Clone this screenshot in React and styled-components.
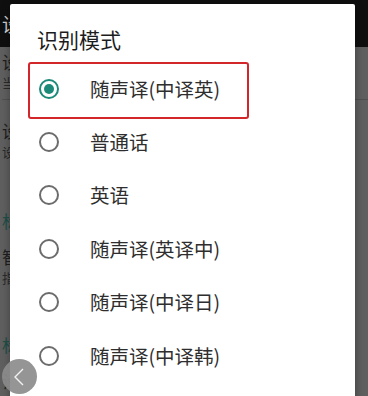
import React from 'react';
import styled, { createGlobalStyle } from 'styled-components';

const GlobalStyle = createGlobalStyle`
  html, body {
    margin: 0;
    padding: 0;
    background: #5f5f5f;
    overflow: hidden;
  }
  body {
    font-family: "Noto Sans CJK SC", "Noto Sans", sans-serif;
  }
`;

const Screen = styled.div`
  position: relative;
  width: 368px;
  height: 396px;
  overflow: hidden;
  background: #5f5f5f;
`;

const AppBar = styled.div`
  height: 47px;
  background: #0f0f0f;
  color: #cfcfcf;
  font-size: 19px;
  display: flex;
  align-items: center;
  padding-left: 2px;
`;

const BgList = styled.div`
  display: flex;
  flex-direction: column;
  padding-left: 2px;
`;

const BgItem = styled.div`
  display: flex;
  flex-direction: column;
  gap: ${p => p.gap || '0px'};
  padding: ${p => p.pad || '6px 0'};
  border-bottom: ${p => (p.line ? '1px solid #505050' : 'none')};
`;

const BgTitle = styled.span`
  font-size: 17px;
  line-height: 22px;
  color: ${p => (p.accent ? '#1f4f48' : '#1e1e1e')};
`;

const BgSub = styled.span`
  font-size: 13px;
  line-height: 20px;
  color: #2a2a2a;
`;

const Dialog = styled.div`
  position: absolute;
  top: 4px;
  left: 10px;
  width: 345px;
  height: 420px;
  background: #ffffff;
  border-radius: 2px;
  box-shadow: 0 2px 8px rgba(0, 0, 0, 0.35);
  display: flex;
  flex-direction: column;
`;

const Title = styled.h2`
  margin: 0;
  height: 58px;
  box-sizing: border-box;
  padding: 20px 0 0 27px;
  font-size: 21px;
  font-weight: 400;
  line-height: 30px;
  color: #1c1c1c;
`;

const Options = styled.div`
  display: flex;
  flex-direction: column;
`;

const Row = styled.div`
  position: relative;
  height: 53.4px;
  display: flex;
  align-items: center;
  padding-left: 29px;
`;

const Radio = styled.span`
  width: 20px;
  height: 20px;
  box-sizing: border-box;
  border-radius: 50%;
  border: 2px solid ${p => (p.checked ? '#1b8a79' : '#6c6c6c')};
  display: flex;
  align-items: center;
  justify-content: center;
  flex-shrink: 0;

  &::after {
    content: '';
    display: ${p => (p.checked ? 'block' : 'none')};
    width: 10px;
    height: 10px;
    border-radius: 50%;
    background: #1b8a79;
  }
`;

const Label = styled.span`
  margin-left: 31px;
  font-size: 19.5px;
  color: #2e2e2e;
  line-height: 26px;
`;

const Highlight = styled.div`
  position: absolute;
  left: 18px;
  top: 0;
  width: 221px;
  height: 57px;
  box-sizing: border-box;
  border: 2.5px solid #d2262a;
  border-radius: 3px;
  pointer-events: none;
`;

const BackButton = styled.div`
  position: absolute;
  left: 2px;
  top: 359px;
  width: 35px;
  height: 35px;
  border-radius: 50%;
  background: rgba(140, 140, 140, 0.92);
  display: flex;
  align-items: center;
  justify-content: center;
`;

const options = [
  '随声译(中译英)',
  '普通话',
  '英语',
  '随声译(英译中)',
  '随声译(中译日)',
  '随声译(中译韩)',
];

export default function App() {
  return (
    <>
      <GlobalStyle />
      <Screen>
        <AppBar>设置</AppBar>
        <BgList>
          <BgItem pad="4px 0 6px" line>
            <BgTitle>设置</BgTitle>
            <BgSub>当前</BgSub>
          </BgItem>
          <BgItem pad="20px 0 8px">
            <BgTitle>设置</BgTitle>
            <BgSub>设置</BgSub>
          </BgItem>
          <BgItem pad="40px 0 6px">
            <BgTitle accent>标准</BgTitle>
          </BgItem>
          <BgItem pad="8px 0 6px">
            <BgTitle>智能</BgTitle>
            <BgSub>指定</BgSub>
          </BgItem>
          <BgItem pad="40px 0 6px" gap="14px">
            <BgTitle accent>标准</BgTitle>
            <BgTitle>设置</BgTitle>
          </BgItem>
        </BgList>

        <Dialog>
          <Title>识别模式</Title>
          <Options>
            {options.map((label, i) => (
              <Row key={label}>
                {i === 0 && <Highlight />}
                <Radio checked={i === 0} />
                <Label>{label}</Label>
              </Row>
            ))}
          </Options>
        </Dialog>

        <BackButton>
          <svg width="16" height="22" viewBox="0 0 16 22">
            <path d="M11 3 L3 11 L11 19" fill="none" stroke="#f2f2f2" strokeWidth="1.4" />
          </svg>
        </BackButton>
      </Screen>
    </>
  );
}
